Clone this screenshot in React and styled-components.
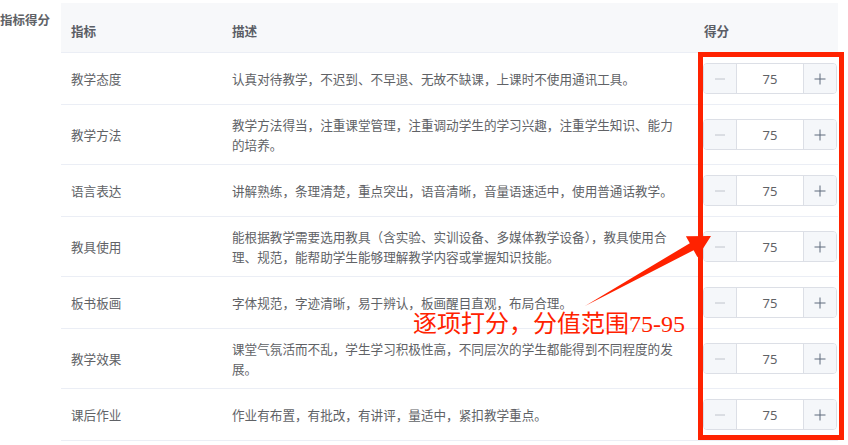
import React from 'react';
import styled, { createGlobalStyle } from 'styled-components';

const GlobalStyle = createGlobalStyle`
  body {
    margin: 0;
    background: #fff;
    font-family: "Noto Sans CJK SC", "Noto Sans", sans-serif;
  }
`;

const criteria = [
  { name: '教学态度', desc: '认真对待教学，不迟到、不早退、无故不缺课，上课时不使用通讯工具。' },
  { name: '教学方法', desc: '教学方法得当，注重课堂管理，注重调动学生的学习兴趣，注重学生知识、能力\n的培养。' },
  { name: '语言表达', desc: '讲解熟练，条理清楚，重点突出，语音清晰，音量语速适中，使用普通话教学。' },
  { name: '教具使用', desc: '能根据教学需要选用教具（含实验、实训设备、多媒体教学设备），教具使用合\n理、规范，能帮助学生能够理解教学内容或掌握知识技能。' },
  { name: '板书板画', desc: '字体规范，字迹清晰，易于辨认，板画醒目直观，布局合理。' },
  { name: '教学效果', desc: '课堂气氛活而不乱，学生学习积极性高，不同层次的学生都能得到不同程度的发\n展。' },
  { name: '课后作业', desc: '作业有布置，有批改，有讲评，量适中，紧扣教学重点。' },
];

const Page = styled.div`
  position: relative;
  display: flex;
  align-items: flex-start;
  width: 848px;
  height: 445px;
  overflow: hidden;
`;

const FieldLabel = styled.div`
  width: 61px;
  box-sizing: border-box;
  padding-right: 11px;
  text-align: right;
  line-height: 40px;
  font-size: 12.5px;
  font-weight: bold;
  color: #606266;
  flex-shrink: 0;
`;

const ScoreTable = styled.table`
  margin-top: 3px;
  width: 777px;
  table-layout: fixed;
  border-collapse: collapse;
  font-size: 12.6px;
  color: #606266;
`;

const HeadCell = styled.th`
  background: #f7f8fa;
  text-align: left;
  font-weight: 600;
  color: #5b5e66;
  line-height: 20px;
  padding: 18px 10px 11px;
  border-bottom: 1px solid #ebeef5;
`;

const BodyCell = styled.td`
  line-height: 20px;
  padding: 10px 10px 9.5px;
  border-bottom: 1px solid #ebeef5;
  vertical-align: middle;
  white-space: pre-line;
`;

const ScoreCell = styled(BodyCell)`
  padding: 10px 0 9.5px 9px;
`;

const Stepper = styled.div`
  display: flex;
  width: 134px;
  height: 31px;
  box-sizing: border-box;
  border: 1px solid #dcdfe6;
  border-radius: 4px;
  overflow: hidden;
  background: #fff;
`;

const StepButton = styled.div`
  width: 32px;
  flex-shrink: 0;
  display: flex;
  align-items: center;
  justify-content: center;
  background: #f5f7fa;
  color: ${({ disabled }) => (disabled ? '#c0c4cc' : '#5f6b7c')};
  ${({ $side }) =>
    $side === 'left' ? 'border-right: 1px solid #dcdfe6;' : 'border-left: 1px solid #dcdfe6;'}
`;

const ValueBox = styled.div`
  flex: 1;
  display: flex;
  align-items: center;
  justify-content: center;
  font-family: "Noto Sans", sans-serif;
  font-size: 13px;
  color: #606266;
`;

const Highlight = styled.div`
  position: absolute;
  left: 698px;
  top: 52px;
  width: 146px;
  height: 388px;
  box-sizing: border-box;
  border: 5px solid #ff2200;
  pointer-events: none;
`;

const Callout = styled.div`
  position: absolute;
  left: 413px;
  top: 311px;
  line-height: 26px;
  font-size: 24px;
  font-family: "Liberation Serif", "Noto Sans CJK SC", serif;
  color: #ff2200;
  white-space: nowrap;
`;

const ArrowLayer = styled.svg`
  position: absolute;
  left: 0;
  top: 0;
  pointer-events: none;
`;

const MinusIcon = () => (
  <svg width="12" height="12" viewBox="0 0 12 12">
    <line x1="1" y1="6" x2="11" y2="6" stroke="currentColor" strokeWidth="1" />
  </svg>
);

const PlusIcon = () => (
  <svg width="12" height="12" viewBox="0 0 12 12">
    <line x1="0.5" y1="6" x2="11.5" y2="6" stroke="currentColor" strokeWidth="1" />
    <line x1="6" y1="0.5" x2="6" y2="11.5" stroke="currentColor" strokeWidth="1" />
  </svg>
);

const ScoreInput = ({ value, min }) => (
  <Stepper>
    <StepButton $side="left" disabled={value <= min}>
      <MinusIcon />
    </StepButton>
    <ValueBox>{value}</ValueBox>
    <StepButton $side="right">
      <PlusIcon />
    </StepButton>
  </Stepper>
);

export default function App() {
  return (
    <>
      <GlobalStyle />
      <Page>
        <FieldLabel>指标得分</FieldLabel>
        <ScoreTable>
          <colgroup>
            <col style={{ width: 161 }} />
            <col style={{ width: 472 }} />
            <col style={{ width: 144 }} />
          </colgroup>
          <thead>
            <tr>
              <HeadCell>指标</HeadCell>
              <HeadCell>描述</HeadCell>
              <HeadCell>得分</HeadCell>
            </tr>
          </thead>
          <tbody>
            {criteria.map(item => (
              <tr key={item.name}>
                <BodyCell>{item.name}</BodyCell>
                <BodyCell>{item.desc}</BodyCell>
                <ScoreCell>
                  <ScoreInput value={75} min={75} />
                </ScoreCell>
              </tr>
            ))}
          </tbody>
        </ScoreTable>

        <Highlight />
        <ArrowLayer width="848" height="445" viewBox="0 0 848 445">
          <polygon
            points="585,306 689.8,243.2 685.9,236.2 711,236 697.5,257.2 693.6,250.2"
            fill="#ff2200"
          />
        </ArrowLayer>
        <Callout>逐项打分，分值范围75-95</Callout>
      </Page>
    </>
  );
}
